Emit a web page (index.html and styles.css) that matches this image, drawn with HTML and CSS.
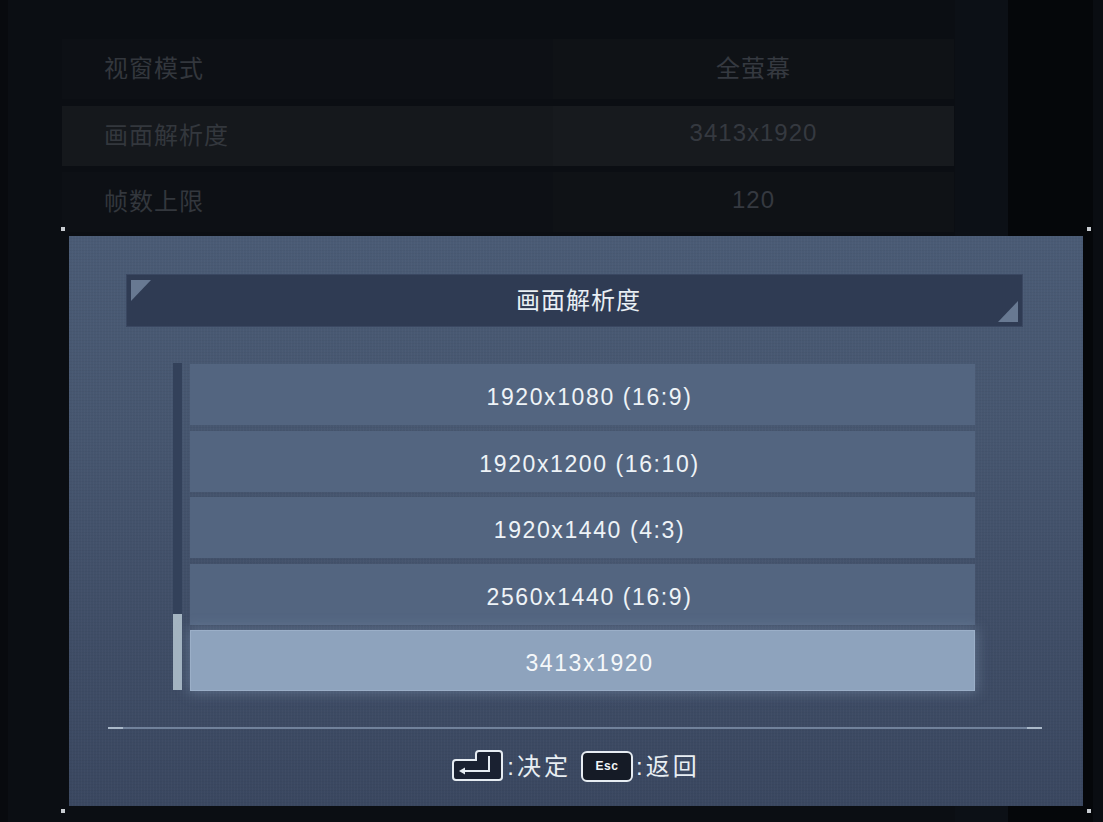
FILE: index.html
```html
<!DOCTYPE html>
<html lang="zh">
<head>
<meta charset="utf-8">
<title>画面解析度</title>
<link rel="stylesheet" href="styles.css">
</head>
<body>
<div class="screen">
  <div class="settings">
    <div class="set-row">
      <div class="set-label">视窗模式</div>
      <div class="set-value">全萤幕</div>
    </div>
    <div class="set-row active">
      <div class="set-label">画面解析度</div>
      <div class="set-value">3413x1920</div>
    </div>
    <div class="set-row">
      <div class="set-label">帧数上限</div>
      <div class="set-value">120</div>
    </div>
  </div>

  <div class="modal">
    <span class="dot dot-tl"></span>
    <span class="dot dot-tr"></span>
    <span class="dot dot-bl"></span>
    <span class="dot dot-br"></span>

    <div class="modal-title">
      <span class="tri tri-tl"></span>
      <span class="tri tri-br"></span>
      画面解析度
    </div>

    <div class="list-wrap">
      <div class="scrollbar"><div class="thumb"></div></div>
      <div class="options">
        <div class="option">1920x1080 (16:9)</div>
        <div class="option">1920x1200 (16:10)</div>
        <div class="option">1920x1440 (4:3)</div>
        <div class="option">2560x1440 (16:9)</div>
        <div class="option selected">3413x1920</div>
      </div>
    </div>

    <div class="divider"></div>

    <div class="footer">
      <svg class="key-enter" width="52" height="32" viewBox="0 0 52 32">
        <path d="M27,1 H47 Q50,1 50,4 V27 Q50,30 47,30 H4 Q1,30 1,27 V13 Q1,10 4,10 H24 V4 Q24,1 27,1 Z" fill="#1a2131" stroke="#e6ecf2" stroke-width="2"/>
        <path d="M37,6 V21 H11" fill="none" stroke="#e6ecf2" stroke-width="2"/>
        <path d="M7,21 L13,17.5 L13,24.5 Z" fill="#e6ecf2"/>
      </svg>
      <span class="hint">:决定</span>
      <span class="key-esc">Esc</span>
      <span class="hint">:返回</span>
    </div>
  </div>
</div>
</body>
</html>
```

FILE: styles.css
```css
* { box-sizing: border-box; }

html, body {
  margin: 0;
  padding: 0;
  background: #0a0d12;
}

.screen {
  position: relative;
  width: 1103px;
  height: 822px;
  overflow: hidden;
  font-family: "Liberation Sans", "Noto Sans CJK SC", sans-serif;
  background: linear-gradient(to right,
    #080a0e 0 8px,
    #0b0e13 8px 955px,
    #0c1016 955px 1008px,
    #05070a 1008px 1093px,
    #0a0d12 1093px);
}

/* background settings list */
.settings {
  margin-left: 62px;
  padding-top: 39px;
  width: 892px;
  display: flex;
  flex-direction: column;
  gap: 6.5px;
}

.set-row {
  display: grid;
  grid-template-columns: 491px 401px;
  height: 60px;
}

.set-label {
  display: flex;
  align-items: center;
  padding-left: 42px;
  padding-bottom: 5px;
  background: #0d1015;
  color: #33373d;
  font-size: 24px;
  letter-spacing: 1px;
}

.set-value {
  display: flex;
  align-items: center;
  justify-content: center;
  padding-bottom: 5px;
  background: #0f1216;
  color: #353940;
  font-size: 24px;
  letter-spacing: 1px;
}

.set-row.active .set-label { background: #15181c; }
.set-row.active .set-value { background: #171a1e; }

/* modal */
.modal {
  position: absolute;
  left: 69px;
  top: 236px;
  width: 1014px;
  height: 570px;
  padding-top: 38px;
  display: flex;
  flex-direction: column;
  background:
    repeating-linear-gradient(90deg, rgba(255,255,255,0.018) 0 1px, transparent 1px 3px),
    repeating-linear-gradient(0deg, rgba(0,0,0,0.03) 0 1px, transparent 1px 3px),
    radial-gradient(ellipse 48% 42% at 52% 52%, rgba(110,130,160,0.16), rgba(110,130,160,0) 75%),
    linear-gradient(180deg, #4a5b75 0%, #46566f 35%, #3f4d66 70%, #3a4760 100%);
}

.dot {
  position: absolute;
  width: 4px;
  height: 4px;
  background: #c8ccd1;
}
.dot-tl { left: -8px; top: -9px; }
.dot-tr { right: -8px; top: -9px; }
.dot-bl { left: -8px; bottom: -7px; }
.dot-br { right: -8px; bottom: -7px; }

.modal-title {
  position: relative;
  margin-left: 57px;
  width: 897px;
  height: 53px;
  flex: none;
  display: flex;
  align-items: center;
  justify-content: center;
  padding-left: 8px;
  padding-bottom: 4px;
  background: #2f3b53;
  border: 1px solid #3a4761;
  color: #e9eff4;
  font-size: 24px;
  letter-spacing: 1px;
}

.tri {
  position: absolute;
  width: 20px;
  height: 21px;
  background: #687992;
}
.tri-tl {
  left: 4px;
  top: 5px;
  clip-path: polygon(0 0, 100% 0, 0 100%);
}
.tri-br {
  right: 4px;
  bottom: 4px;
  clip-path: polygon(100% 0, 100% 100%, 0 100%);
}

.list-wrap {
  margin-top: 36px;
  margin-left: 104px;
  display: flex;
  gap: 8px;
  flex: none;
}

.scrollbar {
  width: 9px;
  height: 327px;
  background: #33415a;
  display: flex;
  flex-direction: column;
  justify-content: flex-end;
}

.thumb {
  height: 76px;
  background: #a4b4c1;
}

.options {
  margin-top: 1px;
  width: 785px;
  display: flex;
  flex-direction: column;
  gap: 5.5px;
}

.option {
  height: 61px;
  display: flex;
  align-items: center;
  justify-content: center;
  padding-left: 14px;
  padding-top: 6px;
  background: #536580;
  color: #eef3f7;
  font-size: 23px;
  letter-spacing: 1.6px;
}

.option.selected {
  background: #8ea3bd;
  color: #f5f8fa;
  box-shadow: inset 0 0 0 1px rgba(170,190,212,0.45), 0 0 12px 2px rgba(150,172,200,0.35);
}

.divider {
  margin-top: 36px;
  margin-left: 39px;
  width: 934px;
  height: 2px;
  flex: none;
  background: linear-gradient(to right,
    #aab9c9 0 15px,
    #71829b 15px calc(100% - 15px),
    #aab9c9 calc(100% - 15px));
}

.footer {
  margin-top: 21px;
  height: 32px;
  display: flex;
  align-items: center;
  justify-content: center;
  color: #e8eef3;
}

.key-enter {
  display: block;
  flex: none;
}

.hint {
  margin-left: 3px;
  padding-bottom: 3px;
  font-size: 24px;
  letter-spacing: 3px;
}

.key-esc {
  margin-left: 10px;
  width: 52px;
  height: 31px;
  display: flex;
  align-items: center;
  justify-content: center;
  border: 2px solid #e6ecf2;
  border-radius: 6px;
  background: #151b26;
  color: #f2f5f8;
  font-size: 12px;
  font-weight: bold;
  letter-spacing: 0.5px;
}
```
